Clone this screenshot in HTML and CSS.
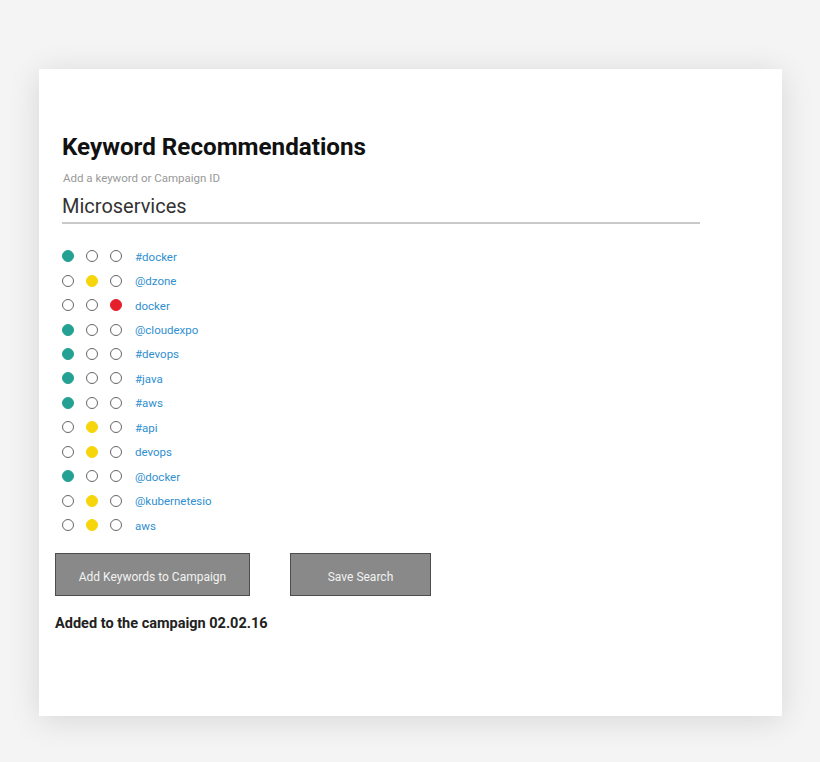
FILE: index.html
```html
<!DOCTYPE html>
<html lang="en">
<head>
<meta charset="utf-8">
<title>Keyword Recommendations</title>
<link rel="stylesheet" href="styles.css">
</head>
<body>
<div class="card">
  <h1 class="title">Keyword Recommendations</h1>
  <div class="label">Add a keyword or Campaign ID</div>
  <div class="field">Microservices</div>
  <ul class="list">
    <li class="row"><span class="dot teal"></span><span class="dot"></span><span class="dot"></span><a class="kw">#docker</a></li>
    <li class="row"><span class="dot"></span><span class="dot yellow"></span><span class="dot"></span><a class="kw">@dzone</a></li>
    <li class="row"><span class="dot"></span><span class="dot"></span><span class="dot red"></span><a class="kw">docker</a></li>
    <li class="row"><span class="dot teal"></span><span class="dot"></span><span class="dot"></span><a class="kw">@cloudexpo</a></li>
    <li class="row"><span class="dot teal"></span><span class="dot"></span><span class="dot"></span><a class="kw">#devops</a></li>
    <li class="row"><span class="dot teal"></span><span class="dot"></span><span class="dot"></span><a class="kw">#java</a></li>
    <li class="row"><span class="dot teal"></span><span class="dot"></span><span class="dot"></span><a class="kw">#aws</a></li>
    <li class="row"><span class="dot"></span><span class="dot yellow"></span><span class="dot"></span><a class="kw">#api</a></li>
    <li class="row"><span class="dot"></span><span class="dot yellow"></span><span class="dot"></span><a class="kw">devops</a></li>
    <li class="row"><span class="dot teal"></span><span class="dot"></span><span class="dot"></span><a class="kw">@docker</a></li>
    <li class="row"><span class="dot"></span><span class="dot yellow"></span><span class="dot"></span><a class="kw">@kubernetesio</a></li>
    <li class="row"><span class="dot"></span><span class="dot yellow"></span><span class="dot"></span><a class="kw">aws</a></li>
  </ul>
  <div class="actions">
    <button class="btn btn-wide">Add Keywords to Campaign</button>
    <button class="btn btn-narrow">Save Search</button>
  </div>
  <p class="status">Added to the campaign 02.02.16</p>
</div>
</body>
</html>
```
FILE: styles.css
```css
html, body {
  margin: 0;
  padding: 0;
}
body {
  background: #f4f4f4;
  font-family: Roboto, "Liberation Sans", Arial, sans-serif;
  padding: 69px 0 0 39px;
  height: 762px;
  box-sizing: border-box;
}
.card {
  width: 743px;
  height: 647px;
  box-sizing: border-box;
  background: #fff;
  box-shadow: 0 4px 30px rgba(0, 0, 0, 0.12);
  padding: 64px 82px 0 16px;
}
.title {
  margin: 0 0 0 7px;
  font-size: 24.2px;
  line-height: 28px;
  font-weight: 700;
  color: #111;
}
.label {
  margin: 10px 0 0 8px;
  font-size: 11.5px;
  line-height: 14px;
  color: #999;
}
.field {
  margin: 9px 0 0 7px;
  font-size: 20px;
  line-height: 24px;
  color: #333;
  padding-bottom: 4px;
  border-bottom: 2px solid #c9c9c9;
}
.list {
  list-style: none;
  margin: 20px 0 0 7px;
  padding: 0;
}
.row {
  display: flex;
  align-items: center;
  height: 24.45px;
}
.dot {
  width: 12px;
  height: 12px;
  box-sizing: border-box;
  border: 1.6px solid #666;
  border-radius: 50%;
  margin-right: 12px;
  flex: none;
}
.dot:nth-child(3) {
  margin-right: 13px;
}
.dot.teal {
  background: #24a192;
  border-color: #24a192;
}
.dot.yellow {
  background: #f6d60a;
  border-color: #f6d60a;
}
.dot.red {
  background: #e6202a;
  border-color: #e6202a;
}
.kw {
  font-size: 11.5px;
  color: #2f8fd0;
  padding-top: 1px;
}
.actions {
  display: flex;
  gap: 40px;
  margin-top: 16px;
}
.btn {
  height: 43px;
  background: #898989;
  border: 1px solid #4d4d4d;
  color: #f2f2f2;
  font-family: Roboto, "Liberation Sans", Arial, sans-serif;
  font-size: 12px;
  padding: 5px 0 0 0;
  margin: 0;
}
.btn-wide {
  width: 195px;
}
.btn-narrow {
  width: 141px;
}
.status {
  margin: 19px 0 0 0;
  font-size: 14.5px;
  line-height: 17px;
  font-weight: 700;
  color: #222;
}
```
